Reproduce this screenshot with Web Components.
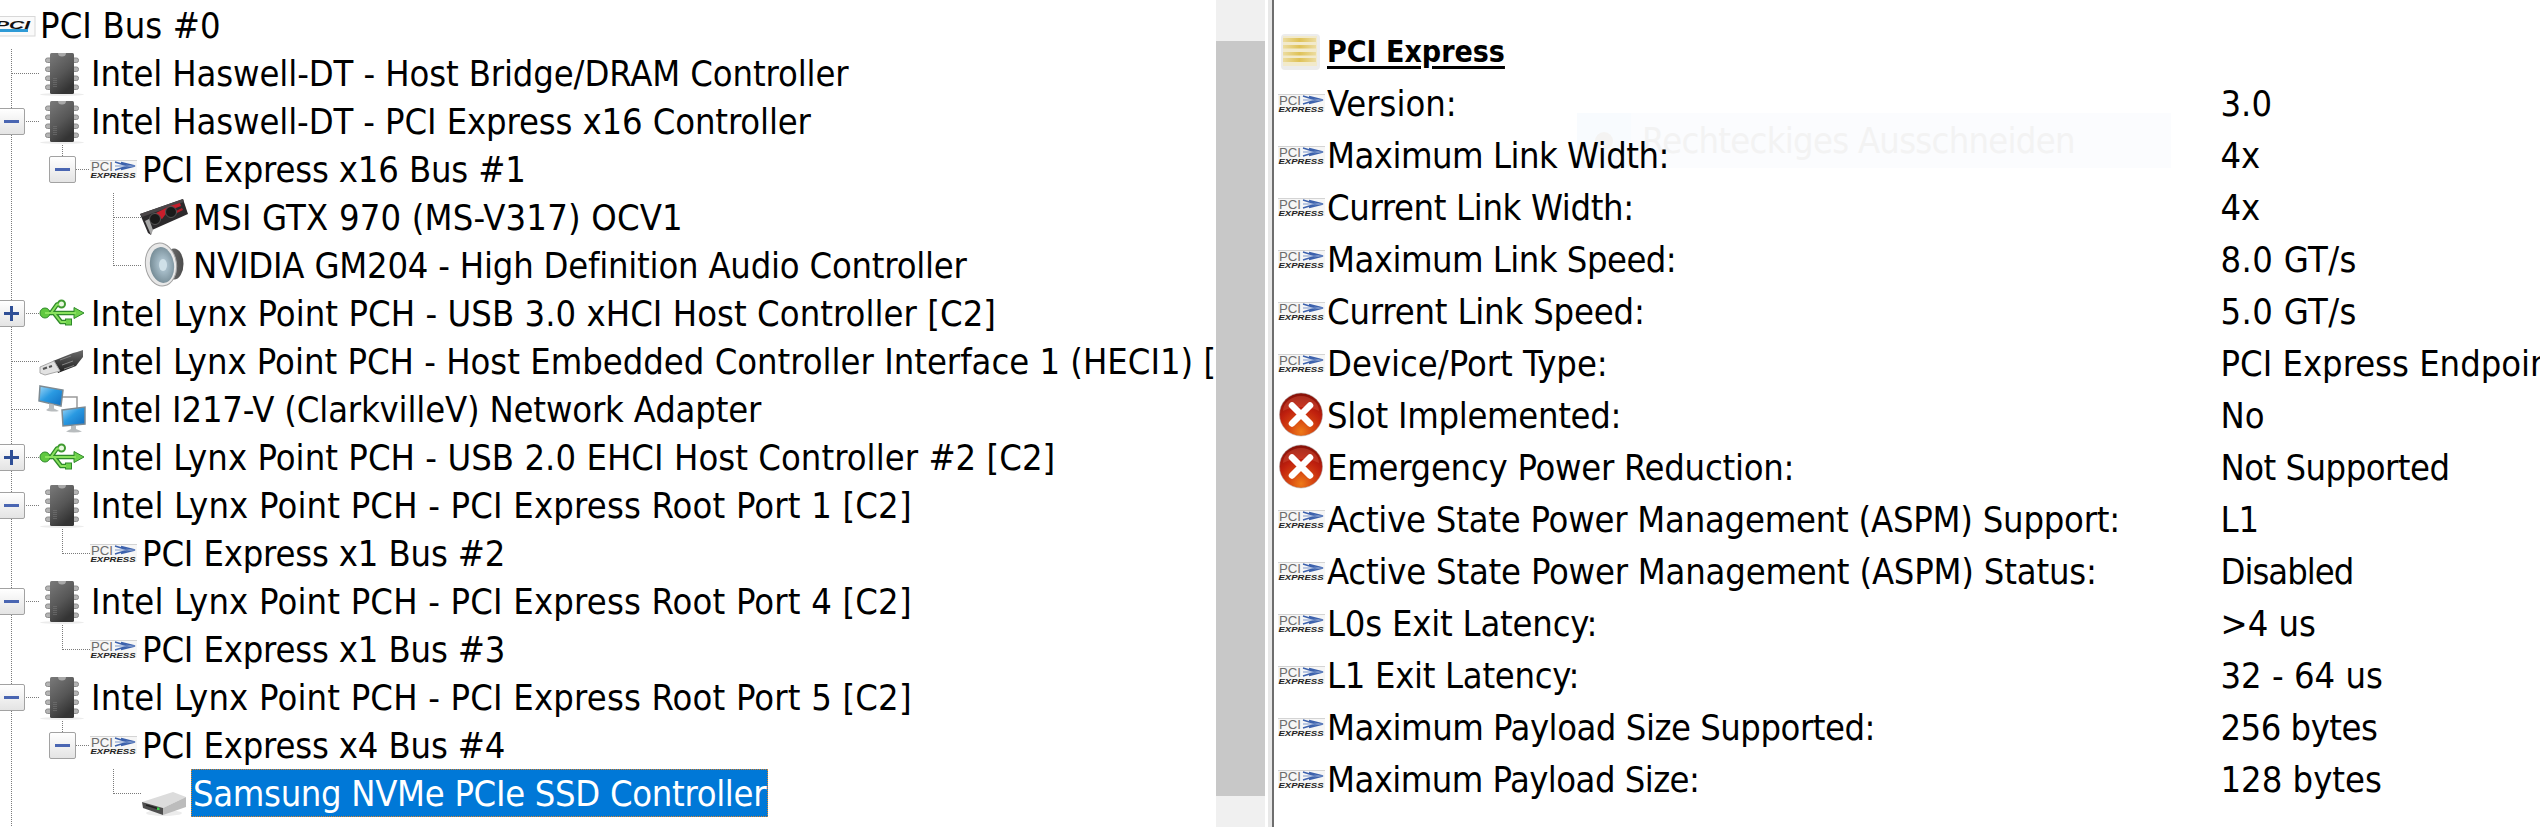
<!DOCTYPE html>
<html>
<head>
<meta charset="utf-8">
<title>PCI Express</title>
<style>
  html, body { margin: 0; height: 100%; background: #fff; overflow: hidden; }
  body { font-family: "DejaVu Sans Condensed", "DejaVu Sans", sans-serif; font-stretch: condensed; font-size: 36px; color: #000; }
</style>
</head>
<body>
<hw-window>
  <device-tree slot="tree">
    <tree-row icon="pcibus" style="--track:.1px">PCI Bus #0</tree-row>
    <tree-row guides="tee" icon="chip" style="--track:-.105px">Intel Haswell-DT - Host Bridge/DRAM Controller</tree-row>
    <tree-row guides="tee-" icon="chip" style="--track:-.108px">Intel Haswell-DT - PCI Express x16 Controller</tree-row>
    <tree-row guides="line box-" icon="pcie" style="--track:-.15px">PCI Express x16 Bus #1</tree-row>
    <tree-row guides="line blank tee" icon="gpu" style="--track:.187px">MSI GTX 970 (MS-V317) OCV1</tree-row>
    <tree-row guides="line blank corner" icon="speaker" style="--track:-.207px">NVIDIA GM204 - High Definition Audio Controller</tree-row>
    <tree-row guides="tee+" icon="usb" style="--track:.058px">Intel Lynx Point PCH - USB 3.0 xHCI Host Controller [C2]</tree-row>
    <tree-row guides="tee" icon="plug">Intel Lynx Point PCH - Host Embedded Controller Interface 1 (HECI1) [C2]</tree-row>
    <tree-row guides="tee" icon="net" style="--track:-.154px">Intel I217-V (ClarkvilleV) Network Adapter</tree-row>
    <tree-row guides="tee+" icon="usb" style="--track:.055px">Intel Lynx Point PCH - USB 2.0 EHCI Host Controller #2 [C2]</tree-row>
    <tree-row guides="tee-" icon="chip" style="--track:.19px">Intel Lynx Point PCH - PCI Express Root Port 1 [C2]</tree-row>
    <tree-row guides="line corner" icon="pcie" style="--track:-.15px">PCI Express x1 Bus #2</tree-row>
    <tree-row guides="tee-" icon="chip" style="--track:.19px">Intel Lynx Point PCH - PCI Express Root Port 4 [C2]</tree-row>
    <tree-row guides="line corner" icon="pcie" style="--track:-.15px">PCI Express x1 Bus #3</tree-row>
    <tree-row guides="tee-" icon="chip" style="--track:.19px">Intel Lynx Point PCH - PCI Express Root Port 5 [C2]</tree-row>
    <tree-row guides="line box-" icon="pcie" style="--track:-.15px">PCI Express x4 Bus #4</tree-row>
    <tree-row guides="line blank corner" icon="drive" selected style="--track:-.3px">Samsung NVMe PCIe SSD Controller</tree-row>
    <tree-row guides="line"></tree-row>
  </device-tree>
  <info-panel slot="info">
    <info-row heading icon="slot" label="PCI Express"></info-row>
    <info-row icon="pcie" label="Version:" value="3.0"></info-row>
    <info-row icon="pcie" label="Maximum Link Width:" value="4x" style="--track:-.5px"></info-row>
    <info-row icon="pcie" label="Current Link Width:" value="4x" style="--track:-.34px"></info-row>
    <info-row icon="pcie" label="Maximum Link Speed:" value="8.0 GT/s" style="--track:-.51px" value-track=".4px"></info-row>
    <info-row icon="pcie" label="Current Link Speed:" value="5.0 GT/s" style="--track:-.17px" value-track=".4px"></info-row>
    <info-row icon="pcie" label="Device/Port Type:" value="PCI Express Endpoint"></info-row>
    <info-row icon="error" label="Slot Implemented:" value="No" style="--track:-.29px"></info-row>
    <info-row icon="error" label="Emergency Power Reduction:" value="Not Supported" style="--track:-.25px" value-track="-.5px"></info-row>
    <info-row icon="pcie" label="Active State Power Management (ASPM) Support:" value="L1" style="--track:-.22px"></info-row>
    <info-row icon="pcie" label="Active State Power Management (ASPM) Status:" value="Disabled" style="--track:-.19px" value-track="-1px"></info-row>
    <info-row icon="pcie" label="L0s Exit Latency:" value="&gt;4 us" style="--track:-.2px"></info-row>
    <info-row icon="pcie" label="L1 Exit Latency:" value="32 - 64 us" style="--track:-.3px"></info-row>
    <info-row icon="pcie" label="Maximum Payload Size Supported:" value="256 bytes" style="--track:-.47px" value-track="-.5px"></info-row>
    <info-row icon="pcie" label="Maximum Payload Size:" value="128 bytes" style="--track:-.54px"></info-row>
  </info-panel>
  <snip-hint slot="hint">Rechteckiges Ausschneiden</snip-hint>
</hw-window>

<script>
const ICONS = {
  chip: `<defs><linearGradient id="b" x1="0" y1="0" x2="0.5" y2="1"><stop offset="0" stop-color="#7a7a7a"/><stop offset="0.6" stop-color="#565656"/><stop offset="1" stop-color="#343434"/></linearGradient></defs>
    <ellipse cx="22" cy="45.5" rx="22" ry="1.5" fill="#ececec"/>
    <g fill="#b4b4b4" stroke="#8c8c8c"><rect x="5.5" y="9" width="33" height="4.5" rx="2"/><rect x="5.5" y="18" width="33" height="4.5" rx="2"/><rect x="5.5" y="27" width="33" height="4.5" rx="2"/><rect x="5.5" y="36" width="33" height="4.5" rx="2"/></g>
    <rect x="10" y="4" width="24" height="41" rx="1.5" fill="url(#b)"/>
    <path d="M18 4a4 3.5 0 0 0 8 0z" fill="#a8a8a8"/>
    <path d="M14 29v9M16 29v9" stroke="#7c7c7c" stroke-dasharray="1 1"/>`,
  pcie: `<rect x="-1" y="15" width="47" height="18" fill="#f6f6f6"/><path d="M-1 15.5h47" stroke="#d4d4d4"/>
    <text x="0" y="25.5" font-family="Liberation Sans" font-size="13" fill="#6c6c6c" textLength="22" lengthAdjust="spacingAndGlyphs">PCI</text>
    <path d="M24 17l13 4-13 4M30 17.500l14 3.500-14 3.500" fill="none" stroke="#3d62ad" stroke-width="1.500"/><path d="M24 21h20" stroke="#7d97cc"/>
    <text x="-0.500" y="32.500" font-family="Liberation Sans" font-size="8" font-weight="700" font-style="italic" fill="#222" textLength="45" lengthAdjust="spacingAndGlyphs">EXPRESS</text>`,
  pcibus: `<rect x="-1" y="15.500" width="47" height="19.500" fill="#fafafa" stroke="#d8d8d8"/>
    <rect x="6" y="28" width="33" height="3" fill="#2f9bd6"/>
    <text x="6" y="28" font-family="Liberation Sans" font-size="10" font-weight="700" font-style="italic" fill="#111" textLength="35" lengthAdjust="spacingAndGlyphs">PCI</text>`,
  usb: `<g fill="none" stroke="#2f8a2a" stroke-width="4.500" stroke-linejoin="round" stroke-linecap="round"><path d="M5 24H36M11 24L17 15.500H19M14 24L21 33H26"/></g>
    <circle cx="5" cy="24" r="5" fill="#5fc840" stroke="#2f8a2a"/><circle cx="21.500" cy="15" r="3.500" fill="#eaf8e0" stroke="#3f9a30" stroke-width="2"/><rect x="25.500" y="30" width="6" height="6" fill="#6fd24c" stroke="#2f8a2a"/>
    <path d="M34 18.500L44 24L34 29.500z" fill="#6fd24c" stroke="#2f8a2a"/>
    <g fill="none" stroke="#8ae25e" stroke-width="2" stroke-linejoin="round"><path d="M5 24H36M11 24L17 15.500H19M14 24L21 33H26"/></g>`,
  plug: `<defs><linearGradient id="b" x1="0" y1="0" x2="0" y2="1"><stop offset="0" stop-color="#6c6c6c"/><stop offset="1" stop-color="#1c1c1c"/></linearGradient></defs>
    <path d="M13 24L33 16L37 15L43 13V20L39 25L36 29L18 36z" fill="url(#b)"/>
    <path d="M0 30L14 24L20 34L5 38L0 36z" fill="#e2e2e2" stroke="#a8a8a8"/><path d="M3 32l4-1.500M9 30l3-1" stroke="#555" stroke-width="2"/>
    <path d="M20 23l11-4M22 28l11-4M24 32l10-3.500" stroke="#858585"/>`,
  net: `<defs><linearGradient id="s" x1="0" y1="0" x2="1" y2="1"><stop offset="0" stop-color="#9fd8f8"/><stop offset="0.45" stop-color="#2a9ae2"/><stop offset="1" stop-color="#0f6cc0"/></linearGradient></defs>
    <path d="M22 12h15v12" fill="none" stroke="#9a9a9a" stroke-width="1.500"/>
    <path d="M0 1L23 5L21 21L-1 16z" fill="url(#s)" stroke="#7d8a92" stroke-width="1.500"/>
    <path d="M9 18.500l5 1v4l5 2.500a8 2 0 0 1-13-1l3-2z" fill="#b8bcbe"/>
    <path d="M22 25L45 22L45 39L23 41z" fill="url(#s)" stroke="#7d8a92" stroke-width="1.500"/>
    <path d="M31 41h5v3l6 2.500a9 2 0 0 1-16 0l5-2.500z" fill="#b8bcbe"/>`,
  gpu: `<path d="M-2 21L41 6L46 21L10 37L9 42L6 40z" fill="#2c2a2c"/><path d="M-2 21L41 6L42 9L0 24z" fill="#4a4648"/>
    <path d="M12 21L28 13L38 10L39 13L26 18L20 26z" fill="#c81e2c"/><path d="M30 20l10-5 1 2-10 5z" fill="#b01c28"/>
    <circle cx="13" cy="26" r="5.500" fill="#1a1a1a" stroke="#555"/><circle cx="29" cy="19" r="5.500" fill="#1a1a1a" stroke="#555"/>
    <path d="M3 28L9 42L11 37L7 26z" fill="#a8a8a8"/>`,
  speaker: `<defs><radialGradient id="c" cx="0.55" cy="0.5" r="0.6"><stop offset="0" stop-color="#dbe8ee"/><stop offset="0.3" stop-color="#a6bcc8"/><stop offset="1" stop-color="#6f858f"/></radialGradient><linearGradient id="b" x1="0" y1="0" x2="1" y2="0"><stop offset="0" stop-color="#777"/><stop offset="1" stop-color="#4c4c4c"/></linearGradient></defs>
    <ellipse cx="32" cy="23" rx="9.500" ry="15.500" fill="url(#b)"/>
    <ellipse cx="19" cy="23.500" rx="15.500" ry="21.500" fill="#e8e8e8" stroke="#a2a2a2" transform="rotate(-8 19 23.500)"/>
    <ellipse cx="20" cy="24" rx="12" ry="18" fill="url(#c)" transform="rotate(-8 20 24)"/>
    <ellipse cx="21" cy="24" rx="4" ry="6" fill="#cfe0e8"/>`,
  drive: `<ellipse cx="22" cy="44" rx="18" ry="3" fill="#ececec"/>
    <path d="M0 33L31 23L44 28L21 39z" fill="#dcdcdc"/><path d="M21 39L44 28V38L21 46z" fill="#bcbcbc"/>
    <path d="M0 33L21 39V46L1 39z" fill="#4e4e4e"/><path d="M4 36l13 4" stroke="#222" stroke-width="1.500"/><rect x="15" y="38.500" width="2.500" height="2.500" fill="#3ad04a"/>`,
  error: `<defs><radialGradient id="r" cx="0.5" cy="0.9" r="0.85"><stop offset="0" stop-color="#ee7a18"/><stop offset="0.3" stop-color="#d84a12"/><stop offset="0.65" stop-color="#c0200e"/><stop offset="1" stop-color="#8a1208"/></radialGradient></defs>
    <circle cx="22" cy="23.500" r="21.500" fill="url(#r)" stroke="#a5a5a5" stroke-opacity="0.5"/>
    <path d="M4 20a18 15 0 0 1 36 0a26 14 0 0 0-36 0z" fill="#e0604a" fill-opacity="0.35"/>
    <path d="M13 14.500L31 32.500M31 14.500L13 32.500" stroke="#fff" stroke-width="6.500" stroke-linecap="round"/>`,
  slot: `<defs><linearGradient id="y" x1="0" y1="0" x2="1" y2="0"><stop offset="0" stop-color="#ecdca0"/><stop offset="0.5" stop-color="#dfc257"/><stop offset="1" stop-color="#ecdca0"/></linearGradient></defs>
    <rect x="2" y="7" width="39" height="36" rx="4" fill="#ececec"/><rect x="4" y="9" width="34" height="30" fill="#f2eacb"/>
    <g fill="url(#y)"><rect x="4" y="11" width="33" height="4"/><rect x="4" y="18" width="33" height="3.500"/><rect x="4" y="25" width="33" height="3.500"/><rect x="4" y="31" width="33" height="4"/></g>`
};

class HwIcon extends HTMLElement {
  connectedCallback() {
    if (this.shadowRoot) return;
    this.attachShadow({ mode: "open" });
    this.shadowRoot.innerHTML = `<style>:host { display: block; width: 48px; height: 48px; flex: none; }
      svg { display: block; overflow: visible; }</style>
      <svg width="48" height="48" viewBox="0 0 48 48">${ICONS[this.getAttribute("name")] || ""}</svg>`;
  }
}

class HwWindow extends HTMLElement {
  constructor() {
    super();
    this.attachShadow({ mode: "open" });
    this.shadowRoot.innerHTML = `<style>
      :host { display: flex; width: 2540px; height: 827px; position: relative; overflow: hidden; }
      .tree { width: 1216px; flex: none; overflow: hidden; }
      .scrollbar { width: 49px; flex: none; display: flex; flex-direction: column; background: #f0f0f0; }
      .scrollbar i { display: block; height: 755px; margin-top: 41px; background: #c8c8c8; }
      .sash { width: 9px; flex: none; box-sizing: border-box; border-left: 3px solid #fff; border-right: 2px solid #6e6e6e; background: #e8e8e8; }
      .info { flex: 1; min-width: 0; overflow: hidden; position: relative; z-index: 1; }
    </style>
    <div class="tree"><slot name="tree"></slot></div>
    <div class="scrollbar"><i></i></div>
    <div class="sash"></div>
    <slot name="hint"></slot>
    <div class="info"><slot name="info"></slot></div>`;
  }
}

class DeviceTree extends HTMLElement {
  constructor() {
    super();
    this.attachShadow({ mode: "open" });
    this.shadowRoot.innerHTML = `<style>:host { display: block; padding-top: 1px; margin-left: -11px; }</style><slot></slot>`;
  }
}

class TreeRow extends HTMLElement {
  connectedCallback() {
    if (this.shadowRoot) return;
    const cells = (this.getAttribute("guides") || "").split(" ").filter(Boolean).map(g => {
      const toggle = g.match(/[+-]$/);
      const kind = toggle ? g.slice(0, -1) : g;
      const box = toggle ? `<span class="toggle ${toggle[0] === "+" ? "plus" : "minus"}"></span>` : "";
      return `<span class="cell ${kind}">${box}</span>`;
    }).join("");
    const icon = this.getAttribute("icon");
    this.attachShadow({ mode: "open" });
    this.shadowRoot.innerHTML = `<style>
      :host { display: flex; height: 48px; white-space: nowrap; line-height: 50px; }
      .cell { width: 51px; height: 48px; flex: none; box-sizing: border-box; padding: 11px 0 0 9px; --dot: #7a7a7a;
        --v: repeating-linear-gradient(var(--dot) 0 1px, transparent 1px 2px);
        --h: repeating-linear-gradient(90deg, var(--dot) 0 1px, transparent 1px 2px); }
      .line { background: var(--v) 22px 0 / 1px 100% no-repeat; }
      .tee { background: var(--v) 22px 0 / 1px 100% no-repeat, var(--h) 23px 24px / 27px 1px no-repeat; }
      .corner { background: var(--v) 22px 0 / 1px 25px no-repeat, var(--h) 23px 24px / 27px 1px no-repeat; }
      .box { background: var(--v) 22px 0 / 1px 12px no-repeat, var(--h) 36px 24px / 13px 1px no-repeat; }
      .toggle { display: block; width: 27px; height: 27px; box-sizing: border-box; border: 1px solid #a2a2a2; border-radius: 2px;
        background: linear-gradient(#fff, #e4e4e4); position: relative; }
      .toggle::before { content: ""; position: absolute; left: 5px; top: 11px; width: 15px; height: 3px; background: #4a66b2; }
      .plus::before { background: #2f4f96; }
      .plus::after { content: ""; position: absolute; left: 11px; top: 5px; width: 3px; height: 15px; background: #2f4f96; }
      .gap { width: 49px; flex: none; }
      .label { padding: 0 2px; height: 48px; box-sizing: border-box; letter-spacing: var(--track, 0); }
      :host([selected]) .label { background: #0078d7; color: #fff; outline: 1px dotted #d9822b; outline-offset: -1px; }
    </style>
    ${cells}<span class="gap">${icon ? `<hw-icon name="${icon}"></hw-icon>` : ""}</span><span class="label"><slot></slot></span>`;
  }
}

class InfoPanel extends HTMLElement {
  constructor() {
    super();
    this.attachShadow({ mode: "open" });
    this.shadowRoot.innerHTML = `<style>:host { display: block; padding: 26px 0 0 5px; }</style><slot></slot>`;
  }
}

class InfoRow extends HTMLElement {
  connectedCallback() {
    if (this.shadowRoot) return;
    this.attachShadow({ mode: "open" });
    this.shadowRoot.innerHTML = `<style>
      :host { display: grid; grid-template-columns: 48px 893.5px 1fr; align-items: center; height: 52px; line-height: 52px; white-space: nowrap; }
      hw-icon { margin-top: -2px; }
      .label { letter-spacing: var(--track, 0); }
      .value { letter-spacing: ${this.getAttribute("value-track") || 0}; }
      :host([heading]) .label { font-weight: 700; font-size: 30px; text-decoration: underline; text-decoration-thickness: 3px; text-underline-offset: 4px; }
    </style>
    <hw-icon name="${this.getAttribute("icon")}"></hw-icon>
    <span class="label">${this.getAttribute("label")}</span>
    <span class="value">${this.getAttribute("value") || ""}</span>`;
  }
}

class SnipHint extends HTMLElement {
  constructor() {
    super();
    this.attachShadow({ mode: "open" });
    this.shadowRoot.innerHTML = `<style>
      :host { position: absolute; left: 1577px; top: 113px; width: 594px; height: 55px; display: flex; align-items: center; background: #fbfcfe; color: #f3f3f3; line-height: 55px; white-space: nowrap; letter-spacing: -.7px; }
      .ico { width: 54px; height: 55px; flex: none; margin-right: 11px; background: #f8fbfe; display: flex; align-items: center; justify-content: center; }
      .ico i { width: 18px; height: 18px; border-radius: 50%; background: #f4f3f2; }
    </style><span class="ico"><i></i></span><slot></slot>`;
  }
}

customElements.define("hw-icon", HwIcon);
customElements.define("hw-window", HwWindow);
customElements.define("device-tree", DeviceTree);
customElements.define("tree-row", TreeRow);
customElements.define("info-panel", InfoPanel);
customElements.define("info-row", InfoRow);
customElements.define("snip-hint", SnipHint);
</script>
</body>
</html>
